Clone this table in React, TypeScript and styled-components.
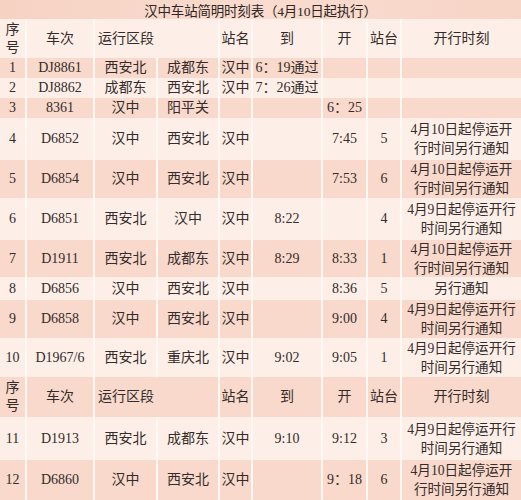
import React from "react";
import styled, { createGlobalStyle } from "styled-components";

const Global = createGlobalStyle`
  html, body { margin: 0; padding: 0; background: #fffaf6; }
  body { font-family: "Liberation Serif", "Noto Sans CJK SC", serif; color: #342c2a; }
`;

const COLS = "25px 66px 61px 60px 31px 68px 43px 32px 119px";

const Table = styled.div`
  width: 521px;
  height: 500px;
  overflow: hidden;
  display: flex;
  flex-direction: column;
  background: #fff8f3;
`;

const Title = styled.div`
  height: 19px;
  flex: none;
  display: flex;
  align-items: center;
  justify-content: center;
  background: linear-gradient(90deg, #f6d2c3 0%, #f9dccf 50%, #f7d5c7 100%);
  font-size: 13.5px;
  color: #2e2624;
  letter-spacing: -0.2px;
`;

const Row = styled.div<{ $h: number }>`
  height: ${(p) => p.$h}px;
  flex: none;
  display: grid;
  grid-template-columns: ${COLS};
  column-gap: 2px;
`;

const Cell = styled.div<{ $pink: boolean; $span?: number; $left?: boolean }>`
  grid-column: span ${(p) => p.$span ?? 1};
  background: ${(p) => (p.$pink ? "#f8d9cc" : "#fdefe8")};
  display: flex;
  flex-direction: column;
  align-items: ${(p) => (p.$left ? "flex-start" : "center")};
  justify-content: center;
  padding-left: ${(p) => (p.$left ? "3px" : "0")};
  font-size: 14px;
  line-height: 18px;
  white-space: nowrap;
  overflow: visible;
`;

const NoteLine = styled.span`
  font-size: 13.6px;
  line-height: 19px;
`;

type R = {
  h: number;
  pink: boolean;
  c: (string | string[])[];
};

const N10 = ["4月10日起停运开", "行时间另行通知"];
const N9 = ["4月9日起停运开行", "时间另行通知"];

const rows: R[] = [
  { h: 20, pink: true, c: ["1", "DJ8861", "西安北", "成都东", "汉中", "6：19通过", "", "", ""] },
  { h: 20, pink: false, c: ["2", "DJ8862", "成都东", "西安北", "汉中", "7：26通过", "", "", ""] },
  { h: 20, pink: true, c: ["3", "8361", "汉中", "阳平关", "", "", "6：25", "", ""] },
  { h: 42, pink: false, c: ["4", "D6852", "汉中", "西安北", "汉中", "", "7:45", "5", N10] },
  { h: 38, pink: true, c: ["5", "D6854", "汉中", "西安北", "汉中", "", "7:53", "6", N10] },
  { h: 42, pink: false, c: ["6", "D6851", "西安北", "汉中", "汉中", "8:22", "", "4", N9] },
  { h: 37, pink: true, c: ["7", "D1911", "西安北", "成都东", "汉中", "8:29", "8:33", "1", N10] },
  { h: 23, pink: false, c: ["8", "D6856", "汉中", "西安北", "汉中", "", "8:36", "5", ["另行通知"]] },
  { h: 38, pink: true, c: ["9", "D6858", "汉中", "西安北", "汉中", "", "9:00", "4", N9] },
  { h: 39, pink: false, c: ["10", "D1967/6", "西安北", "重庆北", "汉中", "9:02", "9:05", "1", N9] },
];

const rows2: R[] = [
  { h: 43, pink: false, c: ["11", "D1913", "西安北", "成都东", "汉中", "9:10", "9:12", "3", N9] },
  { h: 40, pink: true, c: ["12", "D6860", "汉中", "西安北", "汉中", "", "9：18", "6", N10] },
];

const Header = ({ h, pink }: { h: number; pink: boolean }) => (
  <Row $h={h}>
    <Cell $pink={pink}>
      <span>序</span>
      <span>号</span>
    </Cell>
    <Cell $pink={pink}>车次</Cell>
    <Cell $pink={pink} $span={2} $left>
      运行区段
    </Cell>
    <Cell $pink={pink}>站名</Cell>
    <Cell $pink={pink}>到</Cell>
    <Cell $pink={pink}>开</Cell>
    <Cell $pink={pink}>站台</Cell>
    <Cell $pink={pink}>开行时刻</Cell>
  </Row>
);

const DataRow = ({ r }: { r: R }) => (
  <Row $h={r.h}>
    {r.c.map((v, i) => (
      <Cell key={i} $pink={r.pink}>
        {Array.isArray(v) ? v.map((l, j) => <NoteLine key={j}>{l}</NoteLine>) : v}
      </Cell>
    ))}
  </Row>
);

export default function App() {
  return (
    <>
      <Global />
      <Table>
        <Title>汉中车站简明时刻表（4月10日起执行）</Title>
        <Header h={39} pink={false} />
        {rows.map((r, i) => (
          <DataRow key={i} r={r} />
        ))}
        <Header h={40} pink={true} />
        {rows2.map((r, i) => (
          <DataRow key={"b" + i} r={r} />
        ))}
      </Table>
    </>
  );
}
